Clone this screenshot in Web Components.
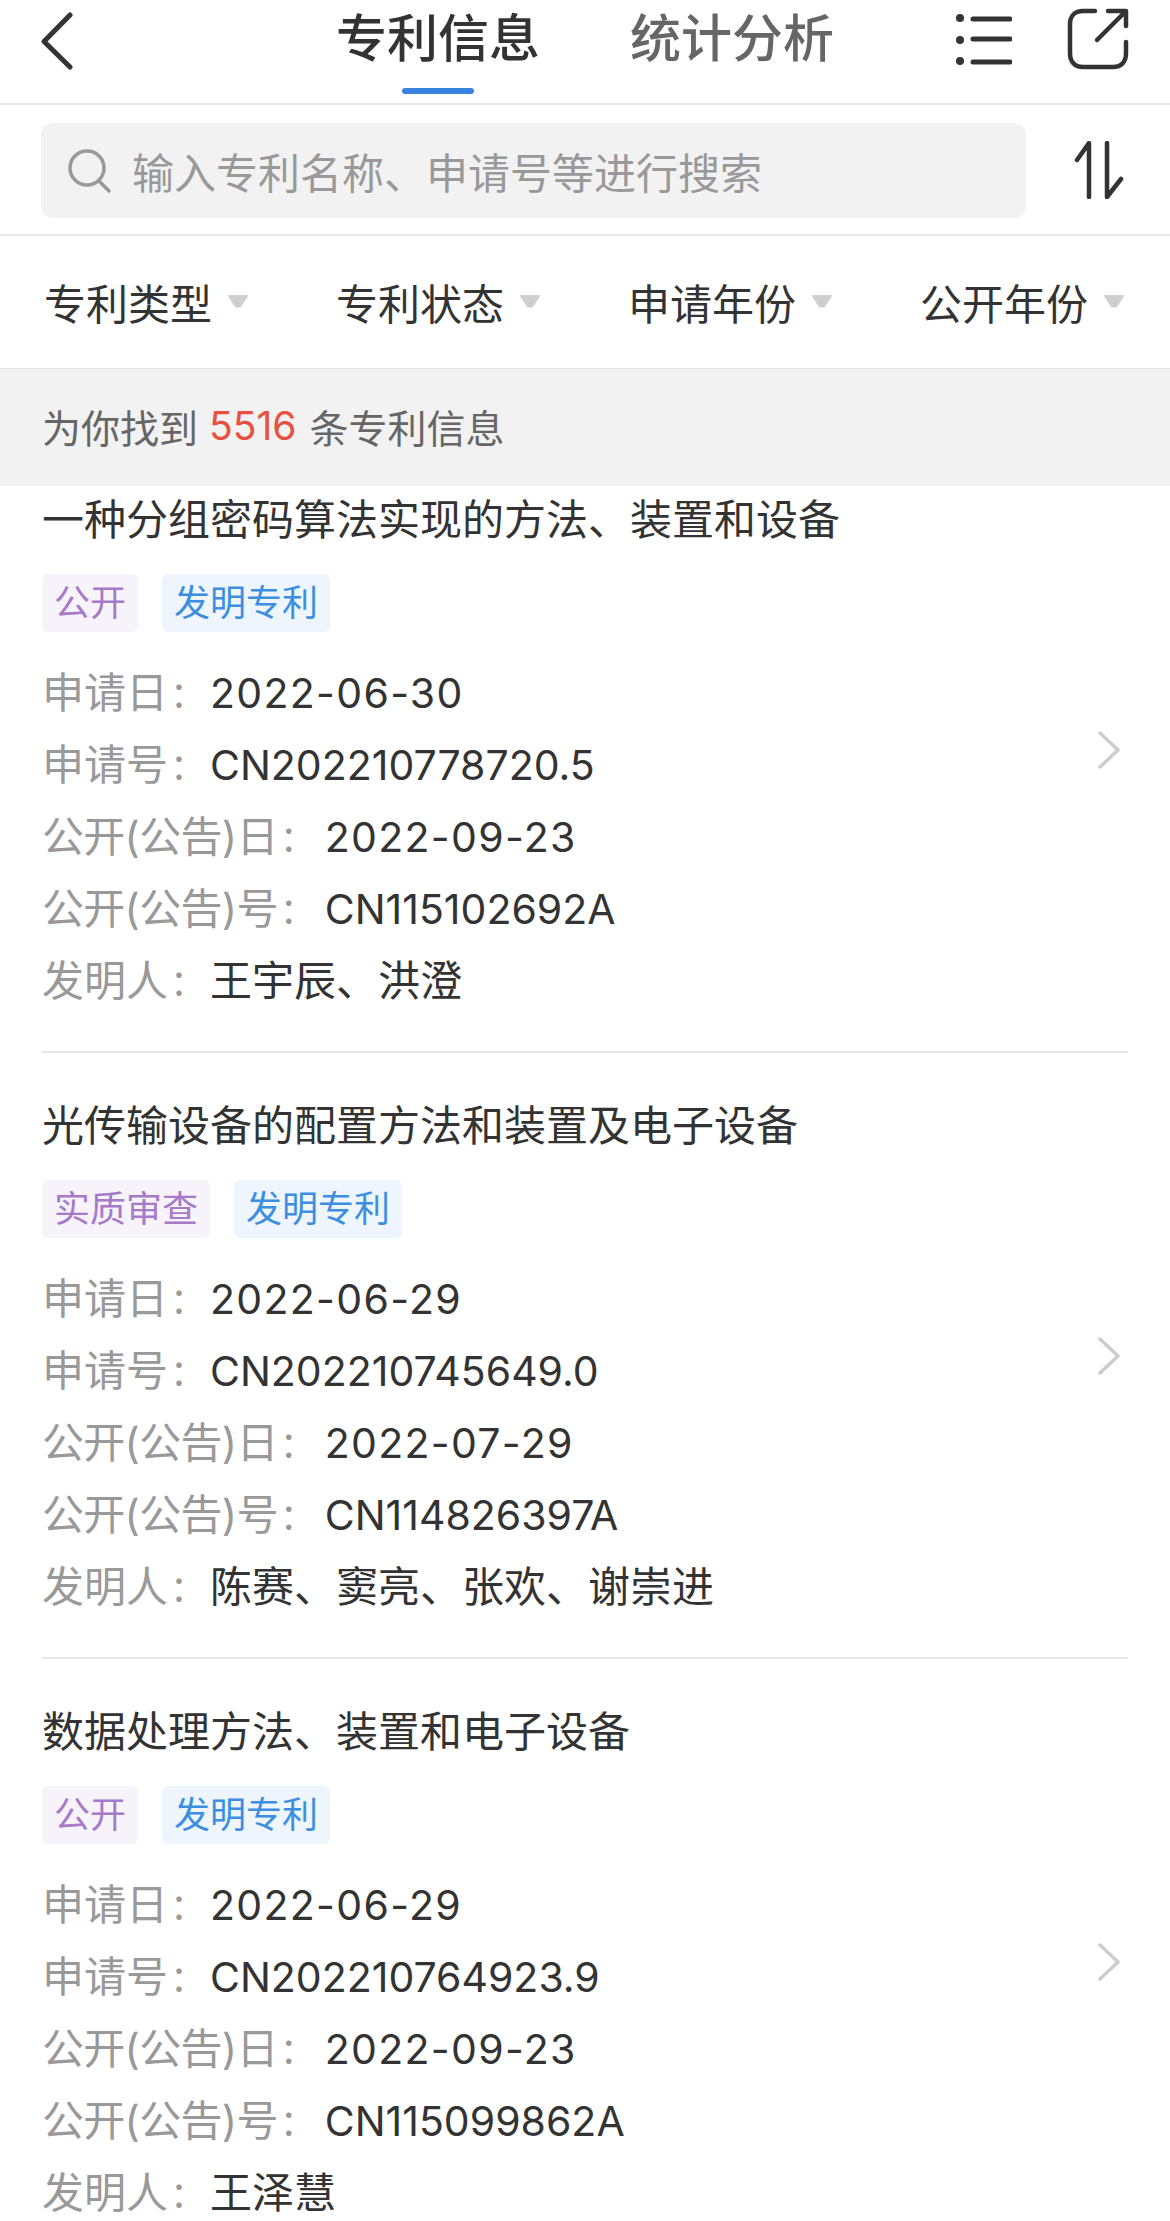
<!DOCTYPE html>
<html lang="zh-CN"><head><meta charset="utf-8"><title>专利信息</title>
<style>
html,body{margin:0;padding:0;background:#fff}
body{width:1170px;height:2221px;overflow:hidden;font-family:"Inter","Noto Sans CJK SC",sans-serif;color:#333}
</style></head><body>
<patent-app>
  <app-header></app-header>
  <search-bar placeholder="输入专利名称、申请号等进行搜索"></search-bar>
  <filter-bar>
    <filter-item>专利类型</filter-item><filter-item>专利状态</filter-item><filter-item>申请年份</filter-item><filter-item>公开年份</filter-item>
  </filter-bar>
  <result-count count="5516"></result-count>
  <patent-list>
    <patent-card title-text="一种分组密码算法实现的方法、装置和设备" status="公开" apply-date="2022-06-30" apply-no="CN202210778720.5" pub-date="2022-09-23" pub-no="CN115102692A" inventors="王宇辰、洪澄"></patent-card>
    <patent-card title-text="光传输设备的配置方法和装置及电子设备" status="实质审查" apply-date="2022-06-29" apply-no="CN202210745649.0" pub-date="2022-07-29" pub-no="CN114826397A" inventors="陈赛、窦亮、张欢、谢崇进"></patent-card>
    <patent-card title-text="数据处理方法、装置和电子设备" status="公开" apply-date="2022-06-29" apply-no="CN202210764923.9" pub-date="2022-09-23" pub-no="CN115099862A" inventors="王泽慧"></patent-card>
  </patent-list>
</patent-app>
<script>
const make=(name,html)=>customElements.define(name,class extends HTMLElement{
  connectedCallback(){ if(this.shadowRoot) return;
    const get=k=>this.getAttribute(k)||'';
    this.attachShadow({mode:'open'}).innerHTML=typeof html==='function'?html(get):html;}
});
make('patent-app',`<style>:host{display:flex;flex-direction:column;width:1170px;height:2221px;overflow:hidden;background:#fff}::slotted(*){flex:none}</style><slot></slot>`);
make('app-header',`<style>
:host{display:grid;grid-template-columns:1fr auto 1fr;height:105px;border-bottom:2px solid #e6e6e6;box-sizing:border-box;align-items:start}
.back{margin:12px 0 0 40px;width:34px;height:58px;display:block}
.tabs{display:flex;gap:90px}
.tab{width:204px;font-size:51px;line-height:60px;padding-top:9px;font-weight:500;color:#666;display:flex;flex-direction:column;align-items:center}
.tab.on{color:#333}
.tab i{display:block;width:72px;height:6px;border-radius:3px;background:#3a84e0;margin-top:19px}
.acts{display:flex;justify-content:flex-end;gap:55px;padding:8px 41px 0 0}
svg{display:block;fill:none;stroke:#333;stroke-linecap:round;stroke-linejoin:round}
</style>
<svg class="back" viewBox="0 0 34 58" stroke-width="5"><path d="M30 3 4 29.500 30 55"/></svg>
<div class="tabs"><div class="tab on">专利信息<i></i></div><div class="tab">统计分析</div></div>
<div class="acts">
<svg width="56" height="60" viewBox="0 0 56 60"><g stroke-width="5"><path d="M17 11H54M17 31H54M17 54H54"/></g><g fill="#333" stroke="none"><circle cx="4" cy="10" r="4"/><circle cx="4" cy="32" r="4"/><circle cx="4" cy="53" r="4"/></g></svg>
<svg width="62" height="62" viewBox="0 0 62 62" stroke-width="4.500"><path d="M28 3H16C8 3 3 8 3 16V45C3 54 8 59 16 59H46C54 59 59 54 59 45V34"/><path d="M30 32 58 4M41 3H59V18"/></svg>
</div>`);
make('search-bar',g=>`<style>
:host{display:flex;align-items:flex-start;height:131px;border-bottom:2px solid #e9e9e9;padding:18px 0 0 41px;box-sizing:border-box}
.box{width:985px;height:95px;border-radius:12px;background:#f2f2f2;display:flex;align-items:center;padding-left:27px;box-sizing:border-box;font-size:42px;color:#999}
.box svg{margin-right:21px;flex:none}
.sort{margin:18px 0 0 48px;flex:none}
svg{display:block;fill:none;stroke-linecap:round;stroke-linejoin:round}
</style>
<div class="box"><svg width="43" height="44" viewBox="0 0 43 44" stroke="#999" stroke-width="3.500"><circle cx="19" cy="19" r="17"/><path d="M31 32 41 42"/></svg><span>${g('placeholder')}</span></div>
<svg class="sort" width="50" height="58" viewBox="0 0 50 58" stroke="#333" stroke-width="4.500"><path d="M3 19 15 2V56M33 2V56L47 38"/></svg>`);
make('filter-bar',`<style>:host{display:flex;justify-content:space-between;align-items:center;height:130px;padding:0 45px 2px 44px;box-sizing:content-box}</style><slot></slot>`);
make('filter-item',`<style>
:host{display:flex;align-items:center;font-size:42px;color:#333;gap:15px}
i{display:block;width:22px;height:13px;background:#cfcfcf;clip-path:polygon(0 0,100% 0,62% 100%,38% 100%);border-radius:2px}
</style><span><slot></slot></span><i></i>`);
make('result-count',g=>`<style>
:host{display:flex;align-items:center;height:118px;background:#f2f2f2;border-top:1px solid #e4e4e4;box-sizing:border-box;padding:0 0 4px 42px;font-size:39px;color:#666;position:relative;z-index:1}
b{font-weight:400;color:#e8503f;margin:0 13px 0 11px}
</style><span>为你找到</span><b>${g('count')}</b><span>条专利信息</span>`);
make('patent-list',`<style>:host{display:block;margin-top:-39px}</style><slot></slot>`);
make('patent-tag',`<style>
:host{display:block;height:58px;line-height:58px;padding:0 12px;border-radius:6px;font-size:36px;background:var(--bg);color:var(--fg)}
</style><slot></slot>`);
make('info-row',g=>{const p=g('label').includes('(');return `<style>
:host{display:flex;height:72px;font-size:42px;line-height:60px;padding-top:6px;box-sizing:border-box;color:#333;white-space:nowrap}
.l{color:#999;letter-spacing:${p?'-.7px':'0'}}
.c{color:#999;font-family:"Inter","Noto Sans CJK TC",sans-serif;font-size:36px;font-feature-settings:"halt";flex:none;box-sizing:border-box;padding-left:2px;width:${p?47:42}px;padding-top:9px;line-height:50px}
.v{font-size:41px}
.d{letter-spacing:1.3px}
.z{font-size:42px}
</style><span class="l">${g('label')}</span><span class="c">：</span><span class="${g('kind')==='date'?'v d':g('kind')==='name'?'z':'v'}">${g('value')}</span>`});
make('patent-card',g=>`<style>
:host{display:flex;margin:0 42px;height:606px;box-sizing:border-box;border-bottom:2px solid #e8e8e8;padding:43px 0 0}
.m{flex:1;min-width:0}
h3{margin:0;font-weight:400;font-size:42px;line-height:60px;color:#333}
.t{display:flex;gap:24px;margin:24px 0 25px}
svg{display:block;flex:none;align-self:center;margin:-42px 8px 0 0;fill:none;stroke:#cdcdcd;stroke-width:3.500;stroke-linecap:round;stroke-linejoin:round}
.p{--bg:#f6f3fa;--fg:#a779c9}.b{--bg:#eef5fd;--fg:#3b8ee0}
</style><div class="m"><h3>${g('title-text')}</h3>
<div class="t"><patent-tag class="p">${g('status')}</patent-tag><patent-tag class="b">发明专利</patent-tag></div>
<info-row label="申请日" kind="date" value="${g('apply-date')}"></info-row>
<info-row label="申请号" value="${g('apply-no')}"></info-row>
<info-row label="公开(公告)日" kind="date" value="${g('pub-date')}"></info-row>
<info-row label="公开(公告)号" value="${g('pub-no')}"></info-row>
<info-row label="发明人" kind="name" value="${g('inventors')}"></info-row></div>
<svg width="22" height="38" viewBox="0 0 22 38"><path d="M2 2 20 19 2 36"/></svg>`);
</script>
</body></html>
